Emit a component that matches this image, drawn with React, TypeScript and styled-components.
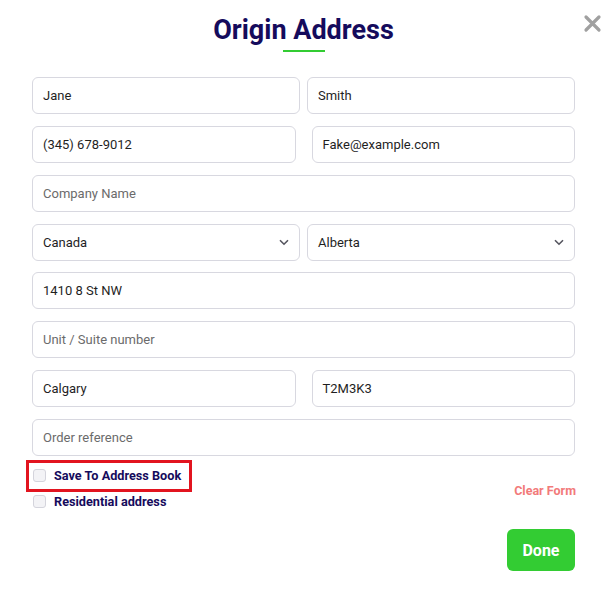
import React from 'react';
import styled, { createGlobalStyle } from 'styled-components';

const GlobalStyle = createGlobalStyle`
  body {
    margin: 0;
    background: #ffffff;
    font-family: Roboto, "Liberation Sans", Arial, sans-serif;
  }
`;

const Modal = styled.div`
  position: relative;
  width: 614px;
  height: 601px;
  padding: 0 39px 0 32px;
  box-sizing: border-box;
  background: #ffffff;
`;

const Title = styled.h1`
  margin: 0;
  padding-top: 14px;
  text-align: center;
  font-size: 27px;
  line-height: 32px;
  font-weight: 700;
  color: #150b5c;
`;

const TitleBar = styled.div`
  width: 42px;
  height: 2px;
  margin: 4px auto 0;
  background: #33cc33;
`;

const CloseButton = styled.button`
  position: absolute;
  top: 14px;
  right: 12px;
  width: 19px;
  height: 19px;
  padding: 0;
  border: none;
  background: none;
  cursor: pointer;
`;

const Form = styled.div`
  display: flex;
  flex-direction: column;
  gap: 11.86px;
  margin-top: 25px;
`;

const Row = styled.div<{ $gap: number }>`
  display: grid;
  grid-template-columns: 1fr 1fr;
  column-gap: ${({ $gap }) => $gap}px;
`;

const Field = styled.div`
  position: relative;
  height: 37px;
  box-sizing: border-box;
  border: 1px solid #d8d8e0;
  border-radius: 6px;
  background: #fff;
  display: flex;
  align-items: center;
  padding: 0 10px;
  font-size: 13px;
  color: #1f1f1f;
`;

const Placeholder = styled.span`
  color: #6b6b6b;
`;

const Chevron = styled.svg`
  position: absolute;
  right: 10px;
  top: 14px;
`;

const Footer = styled.div`
  display: flex;
  justify-content: space-between;
  align-items: flex-end;
  margin-top: 12px;
  padding-left: 1px;
`;

const Checks = styled.div`
  display: flex;
  flex-direction: column;
  gap: 12px;
`;

const CheckRow = styled.label<{ $highlight?: boolean }>`
  position: relative;
  display: flex;
  align-items: center;
  gap: 8px;
  height: 14px;
  font-size: 12.7px;
  font-weight: 700;
  color: #150b5c;
  ${({ $highlight }) =>
    $highlight &&
    `&::before {
      content: '';
      position: absolute;
      left: -7px;
      top: -8px;
      width: 166px;
      height: 32px;
      box-sizing: border-box;
      border: 3px solid #e2141f;
    }`}
`;

const Box = styled.span`
  width: 13px;
  height: 13px;
  box-sizing: border-box;
  border: 1px solid #d4d4dc;
  border-radius: 3px;
  background: #f3f3f6;
`;

const ClearLink = styled.span`
  font-size: 12.5px;
  font-weight: 700;
  color: #f27a7a;
  margin-bottom: 10px;
  margin-right: -1px;
`;

const Actions = styled.div`
  display: flex;
  justify-content: flex-end;
  margin-top: 21px;
`;

const DoneButton = styled.button`
  width: 68px;
  height: 42px;
  border: none;
  border-radius: 6px;
  background: #33cc33;
  color: #ffffff;
  font-family: Roboto, "Liberation Sans", Arial, sans-serif;
  font-size: 16px;
  font-weight: 700;
`;

function SelectField({ value }: { value: string }) {
  return (
    <Field>
      {value}
      <Chevron width="10" height="7" viewBox="0 0 10 7">
        <path d="M1 1.2 5 5.2 9 1.2" fill="none" stroke="#55555f" strokeWidth="1.6" />
      </Chevron>
    </Field>
  );
}

export default function App() {
  return (
    <>
      <GlobalStyle />
      <Modal>
        <Title>Origin Address</Title>
        <TitleBar />
        <CloseButton aria-label="Close">
          <svg width="19" height="19" viewBox="0 0 19 19">
            <path d="M3 3 16 16M16 3 3 16" stroke="#a0a0a0" strokeWidth="3.2" strokeLinecap="round" />
          </svg>
        </CloseButton>
        <Form>
          <Row $gap={7}>
            <Field>Jane</Field>
            <Field>Smith</Field>
          </Row>
          <Row $gap={16}>
            <Field>(345) 678-9012</Field>
            <Field>Fake@example.com</Field>
          </Row>
          <Field>
            <Placeholder>Company Name</Placeholder>
          </Field>
          <Row $gap={7}>
            <SelectField value="Canada" />
            <SelectField value="Alberta" />
          </Row>
          <Field>1410 8 St NW</Field>
          <Field>
            <Placeholder>Unit / Suite number</Placeholder>
          </Field>
          <Row $gap={16}>
            <Field>Calgary</Field>
            <Field>T2M3K3</Field>
          </Row>
          <Field>
            <Placeholder>Order reference</Placeholder>
          </Field>
        </Form>
        <Footer>
          <Checks>
            <CheckRow $highlight>
              <Box />
              Save To Address Book
            </CheckRow>
            <CheckRow>
              <Box />
              Residential address
            </CheckRow>
          </Checks>
          <ClearLink>Clear Form</ClearLink>
        </Footer>
        <Actions>
          <DoneButton>Done</DoneButton>
        </Actions>
      </Modal>
    </>
  );
}
